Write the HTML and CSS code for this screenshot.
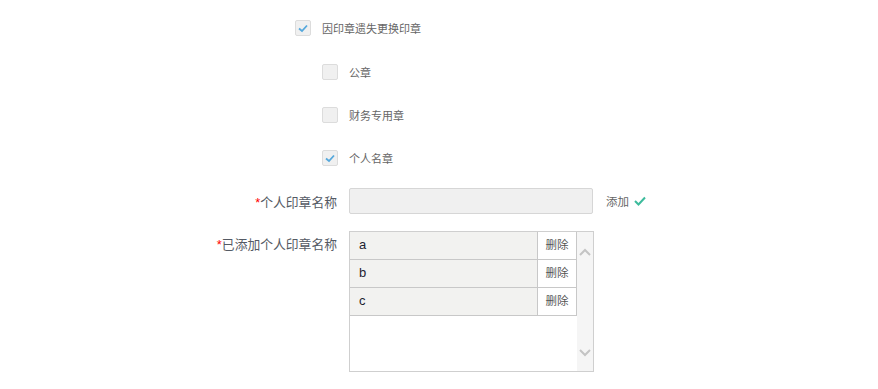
FILE: index.html
```html
<!DOCTYPE html>
<html lang="zh-CN">
  <head>
    <meta charset="UTF-8" />
    <meta name="viewport" content="width=device-width, initial-scale=1.0" />
    <title>印章变更</title>
    <link rel="stylesheet" href="styles.css">
  </head>
  <body>
    <div class="seal-form">
      <div class="check-group">
        <label class="check-row main-check">
          <span class="check-box checked">
            <svg width="16" height="16" viewBox="0 0 16 16"><polyline points="4,8.5 7,11 12,5.5" /></svg>
          </span>
          <span class="check-text">因印章遗失更换印章</span>
        </label>
        <label class="check-row sub-check">
          <span class="check-box"></span>
          <span class="check-text">公章</span>
        </label>
        <label class="check-row sub-check">
          <span class="check-box"></span>
          <span class="check-text">财务专用章</span>
        </label>
        <label class="check-row sub-check">
          <span class="check-box checked">
            <svg width="16" height="16" viewBox="0 0 16 16"><polyline points="4,8.5 7,11 12,5.5" /></svg>
          </span>
          <span class="check-text">个人名章</span>
        </label>
      </div>

      <div class="form-row name-row">
        <div class="form-label"><span class="required">*</span>个人印章名称</div>
        <input type="text" class="text-input" id="sealName" />
        <a href="#" class="add-link">添加
          <svg width="12" height="10" viewBox="0 0 12 10"><polyline points="1,5 4.5,8.5 11,1.5" /></svg>
        </a>
      </div>

      <div class="form-row list-row">
        <div class="form-label"><span class="required">*</span>已添加个人印章名称</div>
        <div class="seal-list">
          <div class="seal-items">
            <div class="seal-item">
              <div class="seal-name">a</div>
              <div class="seal-del">删除</div>
            </div>
            <div class="seal-item">
              <div class="seal-name">b</div>
              <div class="seal-del">删除</div>
            </div>
            <div class="seal-item">
              <div class="seal-name">c</div>
              <div class="seal-del">删除</div>
            </div>
          </div>
          <div class="scroll-bar">
            <svg width="12" height="8" viewBox="0 0 12 8"><polyline points="1,7 6,2 11,7" /></svg>
            <svg width="12" height="8" viewBox="0 0 12 8"><polyline points="1,1 6,6 11,1" /></svg>
          </div>
        </div>
      </div>
    </div>
  </body>
</html>
```

FILE: styles.css
```css
body {
  margin: 0;
  background-color: white;
  font-family: "Liberation Sans", Arial, "Noto Sans CJK SC", sans-serif;
  color: #555;
}
.seal-form {
  padding-top: 20px;
}
.check-group {
  display: flex;
  flex-direction: column;
  gap: 27px;
}
.check-row {
  display: flex;
  align-items: center;
  height: 16px;
}
.main-check {
  padding-left: 295px;
  margin-bottom: 1px;
}
.sub-check {
  padding-left: 322px;
}
.check-box {
  width: 16px;
  height: 16px;
  box-sizing: border-box;
  border: 1px solid #dcdcdc;
  border-radius: 2px;
  background-color: #f0f0f0;
  display: flex;
}
.check-box svg {
  margin: -1px;
}
.check-box polyline {
  fill: none;
  stroke: #55a8dc;
  stroke-width: 1.8;
}
.check-text {
  margin-left: 11px;
  font-size: 11px;
  color: #666;
}
.form-row {
  display: flex;
  align-items: flex-start;
}
.form-label {
  width: 337px;
  text-align: right;
  font-size: 12.8px;
  color: #555a64;
}
.required {
  color: #f00;
  font-weight: normal;
}
.name-row {
  margin-top: 22px;
  align-items: center;
}
.text-input {
  margin-left: 12px;
  width: 244px;
  height: 26px;
  box-sizing: border-box;
  border: 1px solid #d6d6d6;
  border-radius: 2px;
  background-color: #f0f0f0;
  outline: none;
}
.add-link {
  margin-left: 13px;
  font-size: 11.5px;
  color: #666;
  text-decoration: none;
  display: flex;
  align-items: center;
  gap: 5px;
}
.add-link polyline {
  fill: none;
  stroke: #3dbb9c;
  stroke-width: 2;
}
.list-row {
  margin-top: 17px;
}
.list-row .form-label {
  line-height: 28px;
}
.seal-list {
  margin-left: 12px;
  width: 245px;
  height: 141px;
  box-sizing: border-box;
  border: 1px solid #cfcfcf;
  display: flex;
}
.seal-items {
  flex: 1;
}
.seal-item {
  display: flex;
  height: 28px;
  box-sizing: border-box;
  border-bottom: 1px solid #c8c8c8;
  border-right: 1px solid #c8c8c8;
}
.seal-name {
  flex: 1;
  padding-left: 9px;
  background-color: #f2f2f0;
  font-size: 13px;
  line-height: 25px;
  color: #1e2230;
}
.seal-del {
  width: 38px;
  border-left: 1px solid #c8c8c8;
  text-align: center;
  font-size: 11.5px;
  line-height: 27px;
  color: #555;
  cursor: pointer;
}
.scroll-bar {
  width: 16px;
  background-color: #f5f5f5;
  display: flex;
  flex-direction: column;
  justify-content: space-between;
  align-items: center;
  padding: 16px 0 14px;
}
.scroll-bar polyline {
  fill: none;
  stroke: #c4c4c4;
  stroke-width: 2;
}
```
